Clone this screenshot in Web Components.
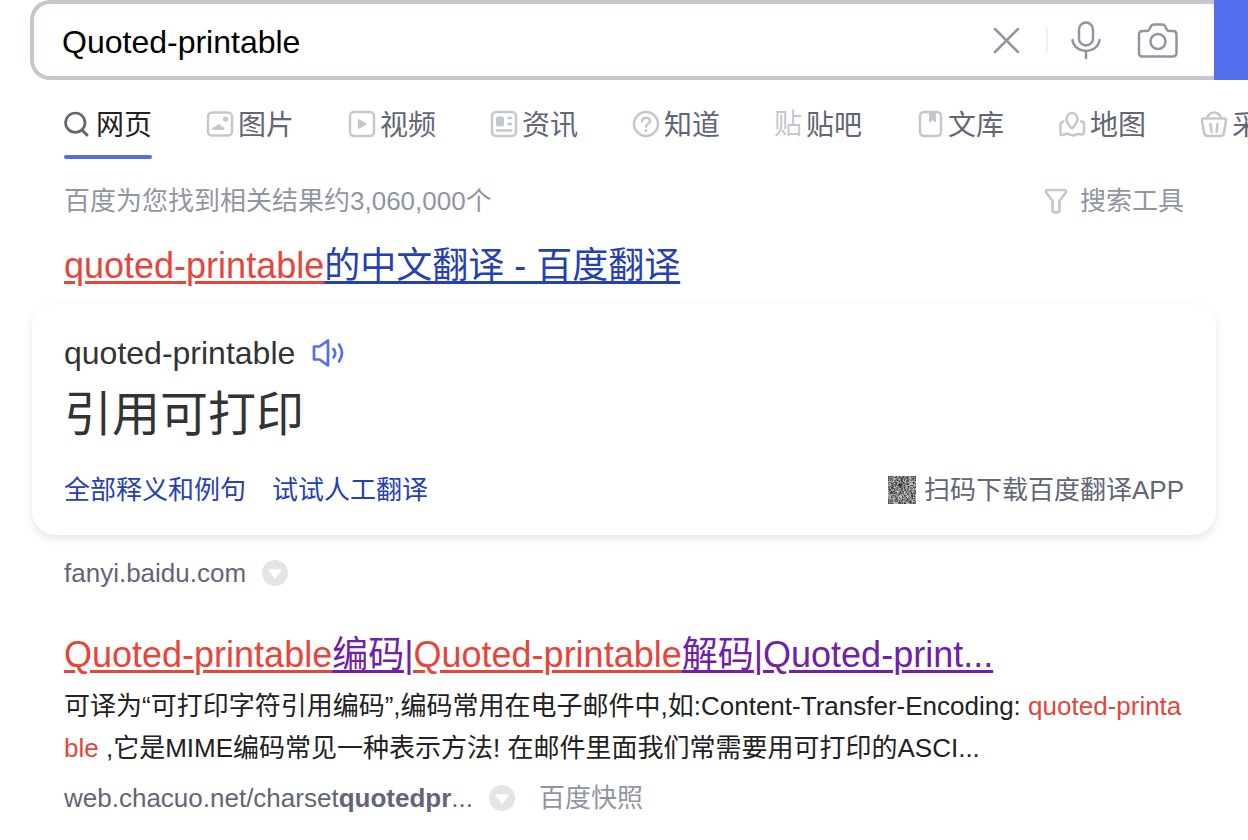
<!DOCTYPE html>
<html lang="zh-CN">
<head>
<meta charset="utf-8">
<meta name="viewport" content="width=device-width, initial-scale=1">
<title>Quoted-printable_百度搜索</title>
<style>
  body {
    margin: 0;
    overflow-x: hidden;
    background: #fff;
    color: #222;
    font-family: "Liberation Sans", "Noto Sans CJK SC", sans-serif;
    font-size: 26px;
    line-height: 40px;
  }
  em {
    color: #e6453b;
    font-style: normal;
  }
  [slot="title"] em {
    text-decoration: underline 3px;
    text-underline-offset: 3px;
  }
</style>
</head>
<body>
<search-bar value="Quoted-printable"></search-bar>
<tab-bar>
  <tab-item icon="search" selected>网页</tab-item>
  <tab-item icon="image">图片</tab-item>
  <tab-item icon="video">视频</tab-item>
  <tab-item icon="news">资讯</tab-item>
  <tab-item icon="question">知道</tab-item>
  <tab-item icon="post">贴吧</tab-item>
  <tab-item icon="book">文库</tab-item>
  <tab-item icon="map">地图</tab-item>
  <tab-item icon="basket">采购</tab-item>
</tab-bar>
<result-tools>百度为您找到相关结果约3,060,000个</result-tools>
<main>
  <search-result>
    <span slot="title"><em>quoted-printable</em>的中文翻译 - 百度翻译</span>
    <translate-card word="quoted-printable">引用可打印</translate-card>
    <source-line slot="source">fanyi.baidu.com</source-line>
  </search-result>
  <search-result visited>
    <span slot="title"><em>Quoted-printable</em>编码|<em>Quoted-printable</em>解码|Quoted-print...</span>
    <result-text>可译为“可打印字符引用编码”,编码常用在电子邮件中,如:Content-Transfer-Encoding: <em>quoted-printable</em> ,它是MIME编码常见一种表示方法! 在邮件里面我们常需要用可打印的ASCI...</result-text>
    <source-line slot="source" snapshot>web.chacuo.net/charset<b>quotedpr</b>...</source-line>
  </search-result>
</main>

<script>
const ICONS = {
  search: {
    box: '0 0 28 28',
    body: '<circle cx="11.300" cy="12.700" r="9.700" stroke-width="2.700"/><path d="M18 20l5 5" stroke-width="3"/>'
  },
  image: {
    box: '0 0 28 28',
    body: `<rect x="2" y="2.500" width="24" height="23" rx="4"/>
      <circle cx="19.500" cy="9" r="2.600" fill="currentColor" stroke="none"/>
      <path d="M6.500 20c-1-2 1-4 3-3.500c2-3.500 5.500-2.500 6 0c2 0 3.500 2 2.500 3.500z" fill="currentColor" stroke="none"/>`
  },
  video: {
    box: '0 0 28 28',
    body: '<rect x="2" y="2" width="24" height="24" rx="4"/><path d="M11 10.500l6 3.500l-6 3.500z" fill="currentColor"/>'
  },
  news: {
    box: '0 0 28 28',
    body: `<rect x="2" y="2" width="24" height="24" rx="4"/>
      <rect x="6" y="6.500" width="8" height="10" rx="2" fill="currentColor" stroke="none"/>
      <path d="M18.500 8h2.500M18.500 14h2.500M7 20.500h14"/>`
  },
  question: {
    box: '0 0 28 28',
    body: `<circle cx="14" cy="14" r="12"/>
      <path d="M10 11.500c0-5 8-5 8-.5c0 3-4 3-4 5.500" stroke-width="2.500"/>
      <circle cx="14" cy="20.500" r="1.600" fill="currentColor" stroke="none"/>`
  },
  post: {
    box: '0 0 28 28',
    body: '<text x="0" y="24" font-size="28" fill="currentColor" stroke="none">贴</text>'
  },
  book: {
    box: '0 0 28 28',
    body: '<rect x="4" y="2" width="21" height="24" rx="4"/><path d="M13 2h7v10.500l-3.500-2l-3.500 2z" fill="currentColor" stroke="none"/>'
  },
  map: {
    box: '0 0 28 28',
    body: `<path d="M14 18.500c-3-3-5.500-6-5.500-9.500a5.500 6 0 0 1 11 0c0 3.500-3 6.500-5.500 9.500z"/>
      <path d="M5.500 11.500q-3 .5-3 3v9q0 2 2 1.500l4-1.500l6.500 2l5-1.500l3.500.5q2.500 0 2.500-2.500v-8.500q0-2-3-2"/>`
  },
  basket: {
    box: '0 0 28 28',
    body: `<path d="M3.500 8.500h21q1.800 0 1.500 2l-2 12q-.5 3.500-4 3.500h-12q-3.500 0-4-3.500l-2-12q-.3-2 1.500-2z"/>
      <path d="M7 8q2-5.500 7-5.500t7 5.500M10.500 14l1 8M17.500 14l-1 8"/>`
  },
  filter: {
    box: '0 0 24 28',
    body: '<path d="M4 3h16q3 0 1.500 3l-6 8v9q0 2.500-3.500 2.500t-3.500-2.500v-9l-6-8q-1.500-3 1.500-3z" stroke-width="2.700"/>'
  },
  close: {
    box: '0 0 28 28',
    body: '<path d="M3 3l23 23M26 3l-23 23"/>'
  },
  mic: {
    box: '0 0 32 40',
    body: '<rect x="9" y="2.500" width="14" height="23" rx="7"/><path d="M2.500 20c2 14.500 25 14.500 27 0M16 31v7"/>'
  },
  camera: {
    box: '0 0 40 36',
    body: `<path d="M5 9h4q1.500 0 2.500-2l1.500-3q1-1.500 3-1.500h8q2 0 3 1.500l1.500 3q1 2 2.500 2h4q3.500 0 3.500 3.500v18.500q0 3.500-4 3.500h-30q-3.500 0-3.500-3.500v-18.500q0-3.500 4-3.500z"/>
      <circle cx="20" cy="19.500" r="7.500"/>`
  },
  speaker: {
    box: '0 0 34 30',
    body: '<path d="M3 8.500h5.500l8.500-6v25l-8.500-6h-5.500z" stroke-width="2.700"/><path d="M22.500 11q3.500 4 0 8.500M28 6.500q6 8 0 17" stroke-width="2.700"/>'
  },
  more: {
    box: '0 0 26 26',
    body: '<circle cx="13" cy="13" r="13" fill="#e4e4e6" stroke="none"/><path d="M7 10h12l-6 8z" fill="#fff" stroke="#fff" stroke-width="1.500"/>'
  }
};

class SvgIcon extends HTMLElement {
  connectedCallback() {
    if (this.shadowRoot) {
      return;
    }
    const icon = ICONS[this.getAttribute('name')];
    const [, , width, height] = icon.box.split(' ');
    this.attachShadow({ mode: 'open' }).innerHTML = `
    <style>
      :host {
        display: block;
        flex: none;
      }
      svg {
        display: block;
        overflow: visible;
        fill: none;
        stroke: currentColor;
        stroke-width: 2.500;
        stroke-linecap: round;
        stroke-linejoin: round;
      }
    </style>
    <svg width="${width}" height="${height}" viewBox="${icon.box}" aria-hidden="true">${icon.body}</svg>
`;
  }
}
customElements.define('svg-icon', SvgIcon);

class SearchBar extends HTMLElement {
  connectedCallback() {
    if (this.shadowRoot) {
      return;
    }
    this.attachShadow({ mode: 'open' }).innerHTML = `
    <style>
      :host {
        display: block;
      }
      form {
        display: flex;
        height: 80px;
        margin-left: 30px;
      }
      .box {
        display: flex;
        flex: 1;
        align-items: center;
        box-sizing: border-box;
        min-width: 0;
        padding: 0 36px 0 28px;
        border: 4px solid #c4c7ce;
        border-right: 0;
        border-radius: 20px 0 0 20px;
        color: #9195a3;
      }
      input {
        flex: 1;
        min-width: 0;
        height: 64px;
        padding: 4px 0 0;
        border: 0;
        outline: 0;
        background: none;
        color: #000;
        font: inherit;
        font-size: 32px;
      }
      button {
        padding: 0;
        border: 0;
        background: none;
        color: inherit;
        cursor: pointer;
      }
      .line {
        width: 2px;
        height: 28px;
        margin: 0 22px 0 26px;
        background: #f2f2f4;
      }
      .camera {
        margin-left: 36px;
      }
      .submit {
        flex: none;
        width: 34px;
        background: #536dec;
      }
    </style>
    <form>
      <div class="box">
        <input type="text" aria-label="搜索">
        <button type="button" aria-label="清空"><svg-icon name="close"></svg-icon></button>
        <span class="line"></span>
        <button type="button" aria-label="语音"><svg-icon name="mic"></svg-icon></button>
        <button type="button" class="camera" aria-label="拍照"><svg-icon name="camera"></svg-icon></button>
      </div>
      <button class="submit" aria-label="百度一下"></button>
    </form>
`;
    this._input = this.shadowRoot.querySelector('input');
    this._input.value = this.getAttribute('value') || '';
    this.shadowRoot.querySelector('form').addEventListener('submit', this);
    this.shadowRoot.querySelector('button').addEventListener('click', this);
  }
  handleEvent(event) {
    switch (event.type) {
      case 'submit':
        event.preventDefault();
        break;
      case 'click':
        this._input.value = '';
        this._input.focus();
        break;
    }
  }
}
customElements.define('search-bar', SearchBar);

class TabBar extends HTMLElement {
  connectedCallback() {
    if (this.shadowRoot) {
      return;
    }
    this.attachShadow({ mode: 'open' }).innerHTML = `
    <style>
      :host {
        display: block;
        overflow: hidden;
        padding: 20px 0 0 64px;
      }
      nav {
        display: flex;
        gap: 54px;
      }
    </style>
    <nav><slot></slot></nav>
`;
  }
}
customElements.define('tab-bar', TabBar);

class TabItem extends HTMLElement {
  connectedCallback() {
    if (this.shadowRoot) {
      return;
    }
    this.attachShadow({ mode: 'open' }).innerHTML = `
    <style>
      :host {
        display: block;
        flex: none;
        color: #626675;
        font-size: 28px;
        line-height: 44px;
      }
      :host([selected]) {
        color: #222;
      }
      a {
        display: flex;
        align-items: center;
        gap: 4px;
        color: inherit;
        text-decoration: none;
        white-space: nowrap;
      }
      span {
        padding-top: 4px;
      }
      svg-icon {
        color: #c4c7ce;
      }
      :host([selected]) svg-icon {
        color: #626675;
      }
      :host::after {
        content: "";
        display: block;
        height: 4px;
        margin-top: 7px;
        border-radius: 2px;
      }
      :host([selected])::after {
        background: #536dec;
      }
    </style>
    <a href="#"><svg-icon name="${this.getAttribute('icon')}"></svg-icon><span><slot></slot></span></a>
`;
  }
}
customElements.define('tab-item', TabItem);

class ResultTools extends HTMLElement {
  connectedCallback() {
    if (this.shadowRoot) {
      return;
    }
    this.attachShadow({ mode: 'open' }).innerHTML = `
    <style>
      :host {
        display: flex;
        justify-content: space-between;
        padding: 22px 64px 0;
        color: #9195a3;
      }
      button {
        display: flex;
        align-items: center;
        gap: 12px;
        padding: 0;
        border: 0;
        background: none;
        color: inherit;
        font: inherit;
        cursor: pointer;
      }
      svg-icon {
        color: #c4c7ce;
      }
    </style>
    <span><slot></slot></span>
    <button type="button"><svg-icon name="filter"></svg-icon>搜索工具</button>
`;
  }
}
customElements.define('result-tools', ResultTools);

class SearchResult extends HTMLElement {
  connectedCallback() {
    if (this.shadowRoot) {
      return;
    }
    this.attachShadow({ mode: 'open' }).innerHTML = `
    <style>
      :host {
        display: block;
        padding: 21px 32px 17px;
      }
      h3 {
        margin: 0 32px;
        font-size: 36px;
        font-weight: normal;
        line-height: 48px;
      }
      a {
        color: #2440b3;
        text-decoration: underline 3px;
        text-underline-offset: 3px;
      }
      :host([visited]) a {
        color: #6f21a8;
      }
    </style>
    <h3><a href="#"><slot name="title"></slot></a></h3>
    <slot></slot>
    <slot name="source"></slot>
`;
  }
}
customElements.define('search-result', SearchResult);

class ResultText extends HTMLElement {
  connectedCallback() {
    if (this.shadowRoot) {
      return;
    }
    this.attachShadow({ mode: 'open' }).innerHTML = `
    <style>
      :host {
        display: block;
        margin: 6px 32px 0;
        line-height: 42px;
        word-break: break-all;
      }
    </style>
    <slot></slot>
`;
  }
}
customElements.define('result-text', ResultText);

class SourceLine extends HTMLElement {
  connectedCallback() {
    if (this.shadowRoot) {
      return;
    }
    this.attachShadow({ mode: 'open' }).innerHTML = `
    <style>
      :host {
        display: flex;
        align-items: center;
        margin: 18px 32px 0;
        color: #626675;
      }
      :host([snapshot]) {
        margin-top: 9px;
      }
      a {
        color: inherit;
        text-decoration: none;
      }
      button {
        margin: 0 24px 0 16px;
        padding: 0;
        border: 0;
        background: none;
        cursor: pointer;
      }
      .snapshot {
        color: #9195a3;
      }
    </style>
    <a href="#"><slot></slot></a>
    <button type="button" aria-label="更多"><svg-icon name="more"></svg-icon></button>
    ${this.hasAttribute('snapshot') ? '<a class="snapshot" href="#">百度快照</a>' : ''}
`;
  }
}
customElements.define('source-line', SourceLine);

class QrCode extends HTMLElement {
  connectedCallback() {
    if (this.shadowRoot) {
      return;
    }
    this.attachShadow({ mode: 'open' }).innerHTML = `
    <style>
      :host {
        display: block;
        flex: none;
      }
      svg {
        display: block;
      }
    </style>
    <svg width="28" height="28" viewBox="0 0 37 37" aria-hidden="true">
      <rect width="37" height="37" fill="#c8c8c8"/>
      <path d="${this._modules()}" fill="#3c3c3c"/>
      <path d="M14 10h4v4h-4z" fill="#222"/>
    </svg>
`;
  }
  _modules() {
    const size = 37;
    let d = '';
    let seed = 11;
    for (let y = 0; y < size; y++) {
      for (let x = 0; x < size; x++) {
        seed = (seed * 16807) % 2147483647;
        // Distance into the nearest finder corner, there is none bottom right
        const fx = x > 18 ? size - 1 - x : x;
        const fy = y > 18 ? size - 1 - y : y;
        let dark = seed / 2147483647 > 0.48;
        if (fx < 8 && fy < 8 && !(x > 18 && y > 18)) {
          const ring = Math.max(Math.abs(fx - 3), Math.abs(fy - 3));
          dark = ring < 2 || ring === 3;
        }
        if (dark) {
          d += `M${x} ${y}h1v1h-1z`;
        }
      }
    }
    return d;
  }
}
customElements.define('qr-code', QrCode);

class TranslateCard extends HTMLElement {
  connectedCallback() {
    if (this.shadowRoot) {
      return;
    }
    this.attachShadow({ mode: 'open' }).innerHTML = `
    <style>
      :host {
        display: block;
        margin-top: 14px;
        padding: 24px 32px 25px;
        border-radius: 24px;
        background: #fff;
        box-shadow: 0 4px 10px rgba(0, 0, 0, .1);
        color: #333;
      }
      .word {
        display: flex;
        align-items: center;
        gap: 16px;
        font-size: 32px;
        line-height: 50px;
      }
      .word button {
        padding: 0;
        border: 0;
        background: none;
        color: #536dec;
        cursor: pointer;
      }
      p {
        margin: 0;
        font-size: 48px;
        line-height: 74px;
      }
      .links {
        display: flex;
        gap: 26px;
        margin-top: 18px;
      }
      a {
        color: #2440b3;
        text-decoration: none;
      }
      .app {
        display: flex;
        align-items: center;
        gap: 8px;
        margin-left: auto;
        color: #626675;
      }
    </style>
    <div class="word">
      <span></span>
      <button type="button" aria-label="发音"><svg-icon name="speaker"></svg-icon></button>
    </div>
    <p><slot></slot></p>
    <div class="links">
      <a href="#">全部释义和例句</a>
      <a href="#">试试人工翻译</a>
      <a href="#" class="app"><qr-code></qr-code>扫码下载百度翻译APP</a>
    </div>
`;
    this.shadowRoot.querySelector('.word span').textContent = this.getAttribute('word');
  }
}
customElements.define('translate-card', TranslateCard);
</script>
</body>
</html>
